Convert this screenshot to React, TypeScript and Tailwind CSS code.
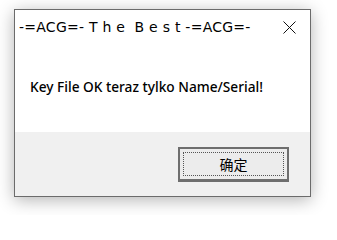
export default function App() {
  return (
    <div className="w-[337px] h-[215px] bg-white overflow-hidden pt-[9px] pl-[14px]">
      <div className="w-[297px] h-[188px] border border-[#6b6b6b] bg-white flex flex-col shadow-[0_3px_16px_rgba(0,0,0,0.3)]">
        {/* title bar */}
        <div className="h-[33px] flex items-center pl-[4px] pr-[14px]">
          <span
            className="flex-1 whitespace-pre text-[14px] tracking-[0.25px] text-black leading-none"
            style={{ fontFamily: '"DejaVu Sans", "Noto Sans CJK SC", sans-serif' }}
          >
            {'-=ACG=- T h e  B e s t -=ACG=-'}
          </span>
          <svg width="13" height="13" viewBox="0 0 13 13" className="mt-[2px]">
            <path d="M0.5 0.5 L12.5 12.5 M12.5 0.5 L0.5 12.5" stroke="#111" strokeWidth="1" />
          </svg>
        </div>
        {/* message */}
        <div className="h-[89px] pl-[15px] pt-[37px]">
          <p
            className="text-[13.7px] font-medium text-black leading-none"
            style={{ fontFamily: '"Noto Sans", sans-serif' }}
          >
            Key File OK teraz tylko Name/Serial!
          </p>
        </div>
        {/* footer */}
        <div className="flex-1 bg-[#f0f0f0] flex justify-end pt-[15px] pr-[21px]">
          <button className="w-[111px] h-[35px] border-2 border-[#6e6e6e] border-b-[3px] bg-[#ececec] p-[3px]">
            <div className="w-full h-full border border-dotted border-[#555] flex items-center justify-center">
              <span
                className="text-[14px] text-black leading-none"
                style={{ fontFamily: '"Noto Sans CJK SC", sans-serif' }}
              >
                确定
              </span>
            </div>
          </button>
        </div>
      </div>
    </div>
  );
}
